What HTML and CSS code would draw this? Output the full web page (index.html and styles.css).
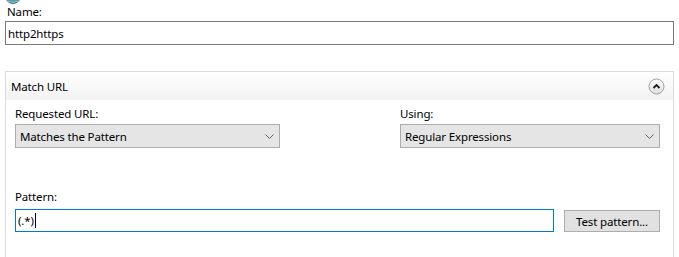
FILE: index.html
```html
<!DOCTYPE html>
<html lang="en">
<head>
  <meta charset="UTF-8">
  <title>Edit Inbound Rule</title>
  <link rel="stylesheet" href="styles.css">
</head>
<body>
  <div class="icon-strip">
    <svg width="16" height="4" viewBox="0 12 16 4">
      <circle cx="8" cy="8" r="7.5" fill="#5f9aa8" stroke="#3f6f7c" stroke-width="1"/>
      <path d="M2 13 Q8 16 14 13" fill="none" stroke="#8cc0c8" stroke-width="1"/>
    </svg>
  </div>

  <div class="field-label name-label">Name:</div>
  <div class="text-box name-box">http2https</div>

  <div class="panel">
    <div class="panel-header">
      <span>Match URL</span>
      <svg class="collapse" width="17" height="17" viewBox="0 0 17 17">
        <defs>
          <linearGradient id="btn" x1="0" y1="0" x2="0" y2="1">
            <stop offset="0" stop-color="#ffffff"/>
            <stop offset="1" stop-color="#dcdcdc"/>
          </linearGradient>
        </defs>
        <circle cx="8.5" cy="8.5" r="7.5" fill="url(#btn)" stroke="#a0a0a0"/>
        <polyline points="5.5,10 8.5,7 11.5,10" fill="none" stroke="#1e1e1e" stroke-width="1.8"/>
      </svg>
    </div>

    <div class="panel-body">
      <div class="two-cols">
        <div>
          <div class="field-label">Requested URL:</div>
          <div class="drop">
            <span>Matches the Pattern</span>
            <svg width="9" height="5" viewBox="0 0 9 5"><polyline points="0.5,0.5 4.5,4.5 8.5,0.5" fill="none" stroke="#606060"/></svg>
          </div>
        </div>
        <div>
          <div class="field-label">Using:</div>
          <div class="drop">
            <span>Regular Expressions</span>
            <svg width="9" height="5" viewBox="0 0 9 5"><polyline points="0.5,0.5 4.5,4.5 8.5,0.5" fill="none" stroke="#606060"/></svg>
          </div>
        </div>
      </div>

      <div class="field-label pattern-label">Pattern:</div>
      <div class="pattern-row">
        <div class="text-box pattern-box">(.*)<span class="caret"></span></div>
        <div class="btn">Test pattern...</div>
      </div>
    </div>
  </div>
</body>
</html>
```

FILE: styles.css
```css
body {
  margin: 0;
  background-color: #fff;
  color: #000;
  font-family: "Noto Sans", "Open Sans", sans-serif;
  font-size: 11.5px;
  letter-spacing: -0.15px;
  overflow: hidden;
}
.icon-strip {
  height: 4px;
  padding-left: 5px;
  line-height: 0;
}
.field-label {
  line-height: 16px;
  height: 16px;
}
.name-label {
  padding: 0 7px;
}
.text-box {
  box-sizing: border-box;
  border: 1px solid #7a7a7a;
  background-color: #fff;
  padding: 0 2px;
  display: flex;
  align-items: center;
}
.name-box {
  margin: 1px 5px 0;
  height: 24px;
}
.panel {
  margin: 26px 5px 0;
  border: 1px solid #dcdcdc;
  border-bottom: none;
  height: 185px;
}
.panel-header {
  height: 28px;
  padding: 0 8px 0 5px;
  display: flex;
  align-items: center;
  justify-content: space-between;
  background: linear-gradient(#ffffff, #f2f2f2);
}
.panel-body {
  padding: 0 13px 0 9px;
}
.two-cols {
  display: grid;
  grid-template-columns: 265px 260px;
  justify-content: space-between;
  padding-top: 6px;
}
.drop {
  box-sizing: border-box;
  margin-top: 2px;
  height: 24px;
  border: 1px solid #acacac;
  background-color: #e5e5e5;
  padding: 0 5px 0 4px;
  display: flex;
  align-items: center;
  justify-content: space-between;
}
.pattern-label {
  margin-top: 41px;
}
.pattern-row {
  display: flex;
  gap: 10px;
  margin-top: 4px;
}
.pattern-box {
  width: 539px;
  height: 23px;
  border-color: #0078d7;
}
.caret {
  display: inline-block;
  width: 1px;
  height: 15px;
  margin-left: 1px;
  background-color: #000;
}
.btn {
  box-sizing: border-box;
  width: 96px;
  height: 22px;
  margin-top: 1px;
  border: 1px solid #adadad;
  background-color: #e1e1e1;
  display: flex;
  align-items: center;
  justify-content: center;
}
```
